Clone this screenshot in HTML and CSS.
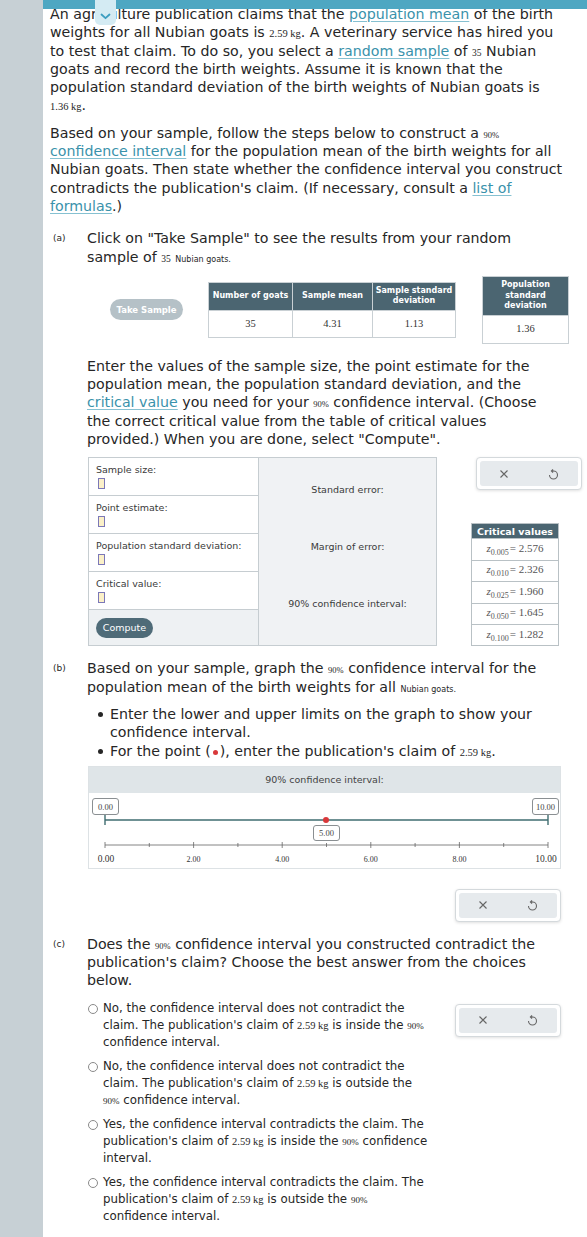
FILE: index.html
```html
<!DOCTYPE html>
<html lang="en">
<head>
<meta charset="utf-8">
<title>Confidence interval</title>
<link rel="stylesheet" href="styles.css">
</head>
<body>
<div class="topbar"></div>
<div class="tab"><svg width="11" height="7" viewBox="0 0 11 7"><path d="M1.5 1.5 L5.5 5.2 L9.5 1.5" fill="none" stroke="#3b9ec0" stroke-width="1.8" stroke-linecap="round" stroke-linejoin="round"/></svg></div>
<div class="page">
  <div class="rail"></div>
  <div class="main">
    <p class="p1">An agriculture publication claims that the <a href="#">population mean</a> of the birth<br>weights for all Nubian goats is <span class="num">2.59 kg</span>. A veterinary service has hired you<br>to test that claim. To do so, you select a <a href="#">random sample</a> of <span class="n9">35</span> Nubian<br>goats and record the birth weights. Assume it is known that the<br>population standard deviation of the birth weights of Nubian goats is<br><span class="num">1.36 kg</span>.</p>
    <p class="p2">Based on your sample, follow the steps below to construct a <span class="n8">90%</span><br><a href="#">confidence interval</a> for the population mean of the birth weights for all<br>Nubian goats. Then state whether the confidence interval you construct<br>contradicts the publication's claim. (If necessary, consult a <a href="#">list of<br>formulas</a>.)</p>

    <div class="part part-a">
      <div class="plabel">(a)</div>
      <div class="pbody">
        <p>Click on "Take Sample" to see the results from your random<br>sample of <span class="n9">35</span> <span class="tiny">Nubian goats.</span></p>
        <div class="samplerow">
          <button class="btn-take">Take Sample</button>
          <table class="stats">
            <tr><th class="c1">Number of goats</th><th class="c2">Sample mean</th><th class="c3">Sample standard<br>deviation</th></tr>
            <tr><td>35</td><td>4.31</td><td>1.13</td></tr>
          </table>
          <table class="stats pop">
            <tr><th>Population<br>standard<br>deviation</th></tr>
            <tr><td>1.36</td></tr>
          </table>
        </div>
        <p class="p3">Enter the values of the sample size, the point estimate for the<br>population mean, the population standard deviation, and the<br><a href="#">critical value</a> you need for your <span class="n8">90%</span> confidence interval. (Choose<br>the correct critical value from the table of critical values<br>provided.) When you are done, select "Compute".</p>
        <div class="calc">
          <div class="box">
            <div class="inputs">
              <div class="field"><div class="flabel">Sample size:</div><span class="inp"></span></div>
              <div class="field"><div class="flabel">Point estimate:</div><span class="inp"></span></div>
              <div class="field"><div class="flabel">Population standard deviation:</div><span class="inp"></span></div>
              <div class="field"><div class="flabel">Critical value:</div><span class="inp"></span></div>
              <div class="field field-btn"><button class="btn-compute">Compute</button></div>
            </div>
            <div class="results">
              <div class="rlabel">Standard error:</div>
              <div class="rlabel">Margin of error:</div>
              <div class="rlabel">90% confidence interval:</div>
            </div>
          </div>
          <div class="crit">
            <div class="tools">
              <div class="tools-in">
                <svg class="ico" width="10" height="10" viewBox="0 0 10 10"><path d="M1.5 1.5 L8.5 8.5 M8.5 1.5 L1.5 8.5" stroke="#666" stroke-width="1.1" fill="none"/></svg>
                <svg class="ico" width="11" height="12" viewBox="0 0 11 12"><path d="M5.5 3 A4 4 0 1 1 1.5 7" fill="none" stroke="#666" stroke-width="1.1"/><path d="M6 3 H3.6 M5 1.4 L3.4 3 L5 4.6" fill="none" stroke="#666" stroke-width="1.1"/></svg>
              </div>
            </div>
            <table class="cv">
              <tr><th>Critical values</th></tr>
              <tr><td><i>z</i><sub>0.005</sub>= 2.576</td></tr>
              <tr><td><i>z</i><sub>0.010</sub>= 2.326</td></tr>
              <tr><td><i>z</i><sub>0.025</sub>= 1.960</td></tr>
              <tr><td><i>z</i><sub>0.050</sub>= 1.645</td></tr>
              <tr><td><i>z</i><sub>0.100</sub>= 1.282</td></tr>
            </table>
          </div>
        </div>
      </div>
    </div>

    <div class="part part-b">
      <div class="plabel">(b)</div>
      <div class="pbody">
        <p>Based on your sample, graph the <span class="n8">90%</span> confidence interval for the<br>population mean of the birth weights for all <span class="tiny">Nubian goats.</span></p>
        <ul class="bullets">
          <li>Enter the lower and upper limits on the graph to show your<br>confidence interval.</li>
          <li>For the point (<span class="reddot"></span>), enter the publication's claim of <span class="num">2.59 kg</span>.</li>
        </ul>
        <div class="graph-area">
          <div class="graph">
            <div class="ghead">90% confidence interval:</div>
            <svg class="gsvg" width="471" height="75" viewBox="0 0 471 75">
              <line x1="16" y1="27" x2="459" y2="27" stroke="#3f6d70" stroke-width="1.4"/>
              <line x1="16" y1="22" x2="16" y2="32" stroke="#3f6d70" stroke-width="1.4"/>
              <line x1="459" y1="22" x2="459" y2="32" stroke="#3f6d70" stroke-width="1.4"/>
              <rect x="3.5" y="5.5" width="26" height="16" rx="2.5" fill="#fff" stroke="#8a8f92"/>
              <text x="16.5" y="16.5" class="glab">0.00</text>
              <rect x="443.5" y="5.5" width="26" height="16" rx="2.5" fill="#fff" stroke="#8a8f92"/>
              <text x="456.5" y="16.5" class="glab">10.00</text>
              <circle cx="237" cy="27" r="3" fill="#d8383a"/>
              <rect x="224.5" y="32.5" width="26" height="15" rx="2.5" fill="#fff" stroke="#8a8f92"/>
              <text x="237.5" y="43" class="glab">5.00</text>
              <line x1="16" y1="52" x2="459" y2="52" stroke="#666" stroke-width="0.8"/>
              <g stroke="#666" stroke-width="0.8">
                <line x1="16" y1="49" x2="16" y2="55"/>
                <line x1="60.3" y1="50" x2="60.3" y2="54"/>
                <line x1="104.6" y1="49" x2="104.6" y2="55"/>
                <line x1="148.9" y1="50" x2="148.9" y2="54"/>
                <line x1="193.2" y1="49" x2="193.2" y2="55"/>
                <line x1="237.5" y1="50" x2="237.5" y2="54"/>
                <line x1="281.8" y1="49" x2="281.8" y2="55"/>
                <line x1="326.1" y1="50" x2="326.1" y2="54"/>
                <line x1="370.4" y1="49" x2="370.4" y2="55"/>
                <line x1="414.7" y1="50" x2="414.7" y2="54"/>
                <line x1="459" y1="49" x2="459" y2="55"/>
              </g>
              <text x="17" y="69" class="axl">0.00</text>
              <text x="104.6" y="69" class="axl sm">2.00</text>
              <text x="193.2" y="69" class="axl sm">4.00</text>
              <text x="281.8" y="69" class="axl sm">6.00</text>
              <text x="370.4" y="69" class="axl sm">8.00</text>
              <text x="457" y="69" class="axl">10.00</text>
            </svg>
          </div>
          <div class="tools tools-right">
            <div class="tools-in">
              <svg class="ico" width="10" height="10" viewBox="0 0 10 10"><path d="M1.5 1.5 L8.5 8.5 M8.5 1.5 L1.5 8.5" stroke="#666" stroke-width="1.1" fill="none"/></svg>
              <svg class="ico" width="11" height="12" viewBox="0 0 11 12"><path d="M5.5 3 A4 4 0 1 1 1.5 7" fill="none" stroke="#666" stroke-width="1.1"/><path d="M6 3 H3.6 M5 1.4 L3.4 3 L5 4.6" fill="none" stroke="#666" stroke-width="1.1"/></svg>
            </div>
          </div>
        </div>
      </div>
    </div>

    <div class="part part-c">
      <div class="plabel">(c)</div>
      <div class="pbody">
        <p>Does the <span class="n8">90%</span> confidence interval you constructed contradict the<br>publication's claim? Choose the best answer from the choices<br>below.</p>
        <div class="answer">
          <div class="opts">
            <div class="opt"><span class="radio"></span><span>No, the confidence interval does not contradict the<br>claim. The publication's claim of <span class="onum">2.59 kg</span> is inside the <span class="on8">90%</span><br>confidence interval.</span></div>
            <div class="opt"><span class="radio"></span><span>No, the confidence interval does not contradict the<br>claim. The publication's claim of <span class="onum">2.59 kg</span> is outside the<br><span class="on8">90%</span> confidence interval.</span></div>
            <div class="opt"><span class="radio"></span><span>Yes, the confidence interval contradicts the claim. The<br>publication's claim of <span class="onum">2.59 kg</span> is inside the <span class="on8">90%</span> confidence<br>interval.</span></div>
            <div class="opt"><span class="radio"></span><span>Yes, the confidence interval contradicts the claim. The<br>publication's claim of <span class="onum">2.59 kg</span> is outside the <span class="on8">90%</span><br>confidence interval.</span></div>
          </div>
          <div class="tools tools-right">
            <div class="tools-in">
              <svg class="ico" width="10" height="10" viewBox="0 0 10 10"><path d="M1.5 1.5 L8.5 8.5 M8.5 1.5 L1.5 8.5" stroke="#666" stroke-width="1.1" fill="none"/></svg>
              <svg class="ico" width="11" height="12" viewBox="0 0 11 12"><path d="M5.5 3 A4 4 0 1 1 1.5 7" fill="none" stroke="#666" stroke-width="1.1"/><path d="M6 3 H3.6 M5 1.4 L3.4 3 L5 4.6" fill="none" stroke="#666" stroke-width="1.1"/></svg>
            </div>
          </div>
        </div>
      </div>
    </div>
  </div>
</div>
</body>
</html>
```

FILE: styles.css
```css
* { box-sizing: border-box; }
html, body { margin: 0; padding: 0; background: #fff; }
body {
  font-family: "DejaVu Sans", Verdana, sans-serif;
  color: #262626;
  font-size: 14.2px;
  line-height: 18.3px;
}
.topbar { position: fixed; top: 0; left: 43px; right: 0; height: 9px; background: #4ea7c2; z-index: 2; }
.tab {
  position: absolute; top: 0; left: 95px; width: 21px; height: 25px;
  background: #d4ebf3; border-radius: 0 0 5px 5px; z-index: 3;
  display: flex; align-items: flex-end; justify-content: center; padding-bottom: 5px;
}
.page { display: flex; min-height: 1237px; }
.rail { width: 43px; flex: none; background: #c7d0d5; }
.main { flex: 1; padding: 5px 0 0 7px; }
p { margin: 0; white-space: nowrap; }
a { color: #3a92ab; text-decoration: underline; text-decoration-color: #86c1d1; text-underline-offset: 2px; }
.num, .n9, .n8, .tiny, .onum, .on8 { line-height: 1; }
.num { font-family: "Liberation Serif", serif; font-size: 10.5px; }
.n9 { font-family: "Liberation Serif", serif; font-size: 9.5px; }
.n8 { font-family: "Liberation Serif", serif; font-size: 8.5px; }
.tiny { font-size: 8px; }
.p1 { margin-bottom: 9px; }
.p2 { margin-bottom: 14px; }

.part { display: flex; }
.plabel { width: 37px; flex: none; padding-left: 3px; font-size: 9px; }
.pbody { flex: 1; }

.samplerow { display: flex; align-items: center; margin-top: 10px; }
.btn-take {
  margin-left: 23px; margin-right: 25px; width: 73px; height: 21px; border: none; border-radius: 11px;
  background: #b5c1c7; color: #fff; font-family: "DejaVu Sans", sans-serif; font-size: 8.5px; font-weight: bold; padding: 0;
}
.stats { border-collapse: collapse; font-size: 8px; line-height: 10.5px; }
.stats th { background: #4b6571; color: #fff; font-weight: bold; height: 28px; padding: 0 1px; border: 1px solid #c9d0d4; white-space: nowrap; }
.stats td {
  height: 27px; text-align: center; border: 1px solid #c9d0d4; background: #fff;
  font-family: "Liberation Serif", serif; font-size: 10.5px; color: #333;
}
.stats .c1 { width: 84px; }
.stats .c2 { width: 80px; }
.stats .c3 { width: 83px; }
.pop { margin-left: 26px; }
.pop th { width: 86px; height: 39px; }
.pop td { height: 28px; }

.p3 { margin-top: 13px; }
.calc { display: flex; margin-top: 9px; margin-left: 1px; }
.box { width: 349px; display: flex; border: 1px solid #c6cdd1; }
.inputs { width: 170px; flex: none; border-right: 1px solid #c6cdd1; }
.field { height: 38px; border-bottom: 1px solid #c6cdd1; background: #fff; padding: 5px 0 0 7px; }
.flabel { font-size: 9.5px; line-height: 13px; color: #3a3a3a; }
.inp { display: block; margin-top: 2px; margin-left: 2px; width: 7px; height: 11px; background: #fbf0c8; border: 1px solid #7b78b8; }
.field-btn { height: 35px; border-bottom: none; background: #eef1f3; display: flex; align-items: center; padding: 0 0 0 7px; }
.btn-compute {
  width: 57px; height: 20px; border: none; border-radius: 10px; background: #4f6b78; color: #fff;
  font-family: "DejaVu Sans", sans-serif; font-size: 9.5px; padding: 0;
}
.results { flex: 1; background: #f0f2f4; display: flex; flex-direction: column; align-items: center; padding-top: 26px; gap: 45px; }
.rlabel { font-size: 9.5px; line-height: 12px; color: #3a3a3a; }

.crit { margin-left: 34px; display: flex; flex-direction: column; justify-content: space-between; }
.tools {
  width: 106px; height: 33px; border: 1px solid #d4d9dc; border-radius: 4px; background: #fff;
  padding: 3px; box-shadow: 0 1px 3px rgba(0,0,0,0.12); margin-left: 5px;
}
.tools-in { height: 100%; background: #e6eaed; border-radius: 3px; display: flex; align-items: center; justify-content: space-around; }
.ico { display: block; }
.cv { border-collapse: collapse; width: 88px; }
.cv th { background: #4b6571; color: #fff; font-size: 9.5px; line-height: 11px; height: 15px; padding: 0; border: 1px solid #b9c1c5; }
.cv td {
  height: 21.4px; padding: 0; text-align: center; border: 1px solid #b9c1c5;
  font-family: "Liberation Serif", serif; font-size: 11px; color: #555; line-height: 12px;
}
.cv i { font-size: 11px; }
.cv sub { font-size: 8px; line-height: 1; vertical-align: -3px; margin-right: 1px; }

.part-b { margin-top: 13px; }
.bullets { margin: 9px 0 0; padding: 0 0 0 23px; list-style: none; }
.bullets li { position: relative; }
.bullets li::before { content: ""; position: absolute; left: -12px; top: 7px; width: 5px; height: 5px; border-radius: 50%; background: #262626; }
.reddot { display: inline-block; width: 5px; height: 5px; border-radius: 50%; background: #d8383a; vertical-align: 1px; margin: 0 2px; }
.graph-area { width: 473px; margin-top: 6px; margin-left: 1px; }
.graph { border: 1px solid #dde2e5; }
.ghead { height: 26px; line-height: 26px; background: #dfe5e8; text-align: center; font-size: 9.5px; color: #444; }
.gsvg { display: block; }
.glab { font-family: "Liberation Serif", serif; font-size: 8.5px; fill: #444; text-anchor: middle; }
.axl { font-family: "Liberation Serif", serif; font-size: 9.5px; fill: #333; text-anchor: middle; }
.axl.sm { font-size: 8px; }
.tools-right { margin-left: auto; margin-top: 20px; }

.part-c { margin-top: 13px; }
.answer { display: flex; align-items: flex-start; margin-top: 10px; width: 474px; }
.answer .tools-right { margin-top: 4px; }
.opts { display: flex; flex-direction: column; gap: 7px; }
.opt { display: flex; gap: 5px; font-size: 11.8px; line-height: 17px; margin-left: 1px; }
.radio { width: 10px; height: 10px; flex: none; border: 1px solid #8a8a8a; border-radius: 50%; margin-top: 4px; }
.onum { font-family: "Liberation Serif", serif; font-size: 10.5px; }
.on8 { font-family: "Liberation Serif", serif; font-size: 9px; }
```
